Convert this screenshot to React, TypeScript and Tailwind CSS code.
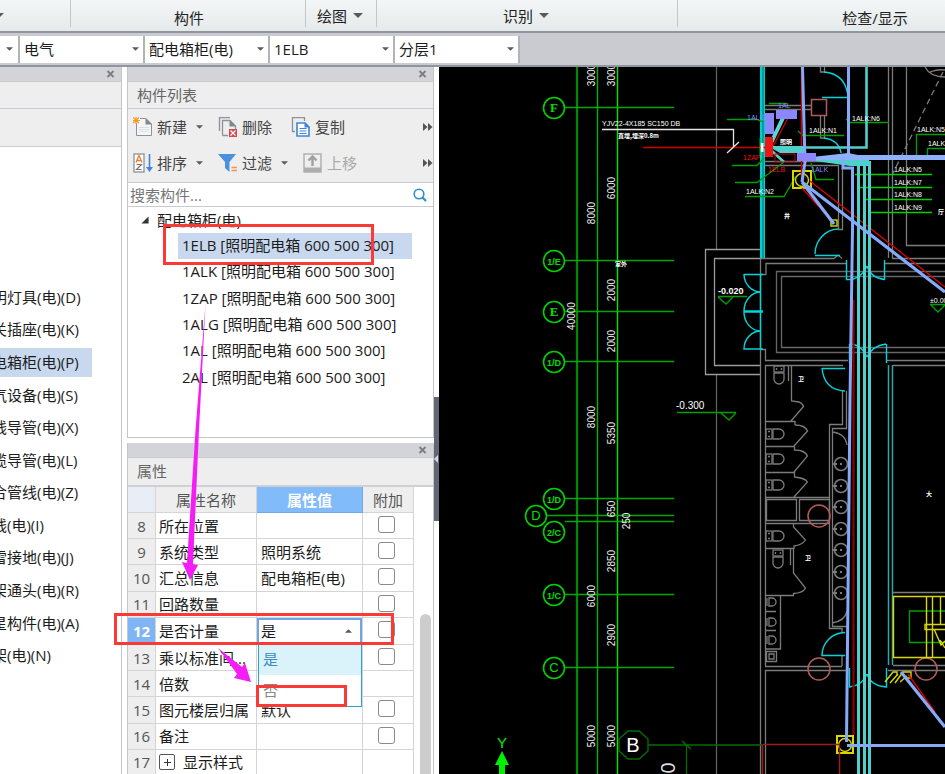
import type { ReactNode } from "react"
import clsx from "clsx"

const modules = [
  "明灯具(电)(D)",
  "关插座(电)(K)",
  "电箱柜(电)(P)",
  "气设备(电)(S)",
  "线导管(电)(X)",
  "缆导管(电)(L)",
  "合管线(电)(Z)",
  "线(电)(I)",
  "雷接地(电)(J)",
  "架通头(电)(R)",
  "星构件(电)(A)",
  "架(电)(N)",
]

const components = ["1ELB", "1ALK", "1ZAP", "1ALG", "1AL", "2AL"]

type Property = { id: number; name: string; value?: string; extra?: boolean; group?: boolean }

const properties: Property[] = [
  { id: 8, name: "所在位置", extra: true },
  { id: 9, name: "系统类型", value: "照明系统", extra: true },
  { id: 10, name: "汇总信息", value: "配电箱柜(电)", extra: true },
  { id: 11, name: "回路数量", extra: true },
  { id: 12, name: "是否计量", value: "是", extra: true },
  { id: 13, name: "乘以标准间...", extra: true },
  { id: 14, name: "倍数" },
  { id: 15, name: "图元楼层归属", value: "默认", extra: true },
  { id: 16, name: "备注", extra: true },
  { id: 17, name: "显示样式", group: true },
]

function Caret({ up, big }: { up?: boolean; big?: boolean }) {
  return (
    <svg
      viewBox="0 0 10 5"
      className={clsx("shrink-0 fill-[#5a5a5a]", big ? "h-[5px] w-[10px]" : "h-1 w-[7px]", up && "rotate-180")}
    >
      <path d="M0 0H10L5 5Z" />
    </svg>
  )
}

function Combo({ label, value }: { label: string; value: string }) {
  return (
    <div className="relative h-[27px] w-[125px] shrink-0 border-r-2 border-[#b0b3b8] bg-white">
      <select aria-label={label} className="h-full w-full appearance-none pl-1 leading-[26px] outline-none">
        <option>{value}</option>
      </select>
      <span className="pointer-events-none absolute top-[11px] right-1">
        <Caret />
      </span>
    </div>
  )
}

function PanelBar() {
  return (
    <div className="flex h-[15px] shrink-0 items-center justify-end border-b border-[#c9cbd0] bg-[#d3d4d9] pr-[6px]">
      <button aria-label="关闭" className="p-0">
        <svg viewBox="0 0 9 8" className="h-2 w-[9px]" stroke="#7d7d7d" strokeWidth="1.8">
          <path d="M1.500 1L7.500 7M7.500 1L1.500 7" />
        </svg>
      </button>
    </div>
  )
}

function ToolButton({ icon, label, menu, disabled }: { icon: ReactNode; label: string; menu?: boolean; disabled?: boolean }) {
  return (
    <button disabled={disabled} className={clsx("flex items-center", disabled ? "text-[#a9a9a9]" : "text-[#444]")}>
      <svg viewBox="0 0 20 20" className="mr-1 size-5" fill="none">
        {icon}
      </svg>
      {label}
      {menu && (
        <span className="ml-[9px] flex">
          <Caret />
        </span>
      )}
    </button>
  )
}

function More() {
  return (
    <button aria-label="更多" className="ml-auto">
      <svg viewBox="0 0 10 8" className="h-2 w-[10px]" fill="#555">
        <path d="M0 0L4.500 4L0 8ZM5 0L9.500 4L5 8Z" />
      </svg>
    </button>
  )
}

const newIcon = (
  <>
    <path d="M3.500 6V18.500H18.500V7L13 1.500H7" fill="#f4f5f6" stroke="#8b9299" />
    <path d="M12.500 1V7.500H19Z" fill="#7f878f" />
    <path d="M6 10.500H16M6 12.500H16M6 14.500H16" stroke="#dcdfe2" />
    <path d="M0 .5L6 6M6 .5L0 6M3 0V7M0 3.500H7" stroke="#f39c1f" strokeWidth="1.200" />
  </>
)

const deleteIcon = (
  <>
    <path d="M1.500 14V.5H12M4.500 18.500V3.500H12L17.500 9V12M4.500 18.500H10" stroke="#8b9299" strokeWidth="1.300" />
    <path d="M11.500 3V9.500H18Z" fill="#7f878f" />
    <rect x="11" y="12" width="8" height="8" fill="#d8484c" />
    <path d="M12.500 13.500L17.500 18.500M17.500 13.500L12.500 18.500" stroke="#fff" strokeWidth="1.200" />
  </>
)

const copyIcon = (
  <>
    <path d="M4 14.500H1.500V.5H13.500V4" stroke="#8b9299" strokeWidth="1.300" />
    <path d="M6 6H14L18 10V19H6Z" fill="#fff" stroke="#3f84d6" strokeWidth="1.600" />
    <path d="M13.500 5V10.500H19Z" fill="#3f84d6" />
    <path d="M8.500 11.500H15.500M8.500 14H15.500M8.500 16.500H15.500" stroke="#3f84d6" />
  </>
)

const sortIcon = (
  <>
    <rect x="1" y="1" width="10" height="18" fill="#fff" stroke="#8b9299" strokeWidth="1.300" />
    <path d="M3 9.500L6 2.500L9 9.500M4 7.500H8" stroke="#ee7d2b" strokeWidth="1.300" />
    <path d="M3.500 11.500H8.500L3.500 16.500H8.500" stroke="#777" strokeWidth="1.200" />
    <path d="M16.500 1V17" stroke="#3f84d6" strokeWidth="1.600" />
    <path d="M13 14L16.500 19L20 14Z" fill="#3f84d6" />
  </>
)

const filterIcon = (
  <>
    <path d="M0 1H18L11.500 9V19L7 15V9Z" fill="#4a90de" />
    <path d="M13.500 14.500H19M13.500 17.500H19" stroke="#ee9455" strokeWidth="1.300" />
  </>
)

const upIcon = (
  <>
    <rect x="1" y="1" width="17" height="18" stroke="#adadad" strokeWidth="1.400" />
    <rect x="1" y="14.500" width="17" height="4.500" fill="#adadad" />
    <path d="M9.500 13V4M5.500 7.500L9.500 3.500L13.500 7.500" stroke="#a0a0a0" strokeWidth="2.400" />
  </>
)

function Ribbon() {
  return (
    <header className="flex h-[33px] shrink-0 overflow-hidden border-b-2 border-[#9096a0] bg-linear-to-b from-[#f4f6f7] to-[#e5eaeb] text-[#222]">
      <div className="flex h-[27px] w-[71px] shrink-0 items-center border-r border-[#c3c7ca] pt-1">
        <span className="-ml-[6px]">
          <Caret big />
        </span>
      </div>
      <div className="h-[27px] w-[235px] shrink-0 border-r border-[#c3c7ca] pt-2 pl-[2px] text-center leading-5">构件</div>
      <button className="flex h-[27px] w-[71px] shrink-0 items-center justify-center gap-1.5 border-r border-[#c3c7ca] pt-1 pr-[2px]">
        绘图
        <Caret big />
      </button>
      <button className="flex h-[27px] w-[301px] shrink-0 items-center justify-center gap-1.5 border-r border-[#c3c7ca] pt-1 pr-[2px]">
        识别
        <Caret big />
      </button>
      <div className="w-[396px] shrink-0 pt-2 pr-[2px] text-center leading-5">检查/显示</div>
    </header>
  )
}

function ModulePanel() {
  return (
    <aside className="flex w-[122px] shrink-0 flex-col overflow-hidden border-r border-[#c3c5c9] bg-white">
      <PanelBar />
      <div className="h-[27px] shrink-0 border-b border-[#c9cbd0] bg-[#eee]" />
      <div className="h-[38px] shrink-0 border-b border-[#c9cbd0] bg-[#eee]" />
      <ul className="mt-[134px] grid h-[391px] shrink-0 auto-rows-fr items-center">
        {modules.map((m) => (
          <li key={m} className={clsx("h-[29px] w-[92px]", m.includes("(P)") && "bg-[#c8d8ee]")}>
            <button className="-ml-2 block leading-7 whitespace-nowrap">{m}</button>
          </li>
        ))}
      </ul>
    </aside>
  )
}

function ComponentPanel() {
  return (
    <section className="flex h-[371px] shrink-0 flex-col border border-t-0 border-[#c3c5c9] bg-white">
      <PanelBar />
      <h2 className="h-[27px] shrink-0 border-b border-[#c9cbd0] bg-[#eee] pl-[9px] leading-[26px] text-[#666]">构件列表</h2>
      <div className="h-[74px] shrink-0 border-b border-[#c9cbd0] bg-[#eee] pl-[5px]">
        <div className="flex h-9 items-center gap-[15px]">
          <ToolButton icon={newIcon} label="新建" menu />
          <ToolButton icon={deleteIcon} label="删除" />
          <span className="ml-1">
            <ToolButton icon={copyIcon} label="复制" />
          </span>
          <More />
        </div>
        <div className="flex h-9 items-center gap-[15px]">
          <ToolButton icon={sortIcon} label="排序" menu />
          <ToolButton icon={filterIcon} label="过滤" menu />
          <ToolButton icon={upIcon} label="上移" disabled />
          <More />
        </div>
      </div>
      <div className="flex h-6 shrink-0 items-center border-b border-[#c9cbd0] pr-1.5">
        <input
          aria-label="搜索构件"
          placeholder="搜索构件..."
          className="min-w-0 flex-1 pl-0.5 leading-5 outline-none placeholder:text-[#777]"
        />
        <svg viewBox="0 0 14 14" className="size-[14px]" fill="none" stroke="#2c8fc9">
          <circle cx="6" cy="6" r="4.800" strokeWidth="1.600" />
          <path d="M9.500 9.500L13 13" strokeWidth="2.200" />
        </svg>
      </div>
      <div className="flex h-[26px] shrink-0 items-center gap-2 pl-[13px]">
        <svg viewBox="0 0 9 9" className="size-2" fill="#333">
          <path d="M8.500 .5V8.500H.5Z" />
        </svg>
        <span>配电箱柜(电)</span>
      </div>
      <ul className="ml-[50px] grid h-[158px] w-[234px] auto-rows-fr">
        {components.map((c, i) => (
          <li key={c} className={clsx("pl-1 whitespace-nowrap", i === 0 && "bg-[#c8d8ee]")}>
            <button className="block leading-[25px]">{c} [照明配电箱 600 500 300]</button>
          </li>
        ))}
      </ul>
    </section>
  )
}

function ValueCell({ row }: { row: Property }) {
  if (row.id !== 12) return <>{row.value}</>
  return (
    <div className="relative -mx-1 h-[26px]">
      <button className="flex h-full w-full items-center justify-between border-2 border-[#6fa5e6] bg-white pr-2 pl-0.5">
        是
        <Caret up />
      </button>
      <ul role="listbox" className="absolute top-[25px] right-0 left-px z-10 border border-[#2ba0d4] bg-white">
        <li role="option" aria-selected="true" className="h-[31px] bg-[#daf2fa] pl-1 leading-[30px] text-[#3f8cc5]">
          是
        </li>
        <li role="option" aria-selected="false" className="h-[31px] pl-1 leading-[30px] text-[#888]">
          否
        </li>
      </ul>
    </div>
  )
}

function PropertyPanel() {
  return (
    <section className="mt-[5px] flex min-h-0 flex-1 flex-col overflow-hidden border-x border-[#c3c5c9] bg-white">
      <PanelBar />
      <h2 className="h-[29px] shrink-0 border-b-2 border-[#cfd0d4] bg-[#eee] pl-[9px] leading-[27px] text-[#666]">属性</h2>
      <div className="flex min-h-0 flex-1">
        <table className="h-[289px] w-[286px] shrink-0 table-fixed border-separate border-spacing-0">
          <colgroup>
            <col className="w-7" />
            <col className="w-[101px]" />
            <col className="w-[106px]" />
            <col className="w-[51px]" />
          </colgroup>
          <thead>
            <tr className="h-[26px] text-[#555]">
              <th className="border-r border-b border-[#d4d4d4] bg-[#e9edf5]" />
              <th className="border-r border-b border-[#d4d4d4] bg-[#eee] p-0 leading-5 font-normal">属性名称</th>
              <th className="border-r border-b border-[#6fa9ef] bg-[#82bbfa] p-0 leading-5 font-bold text-white">属性值</th>
              <th className="border-r border-b border-[#d4d4d4] bg-[#eee] p-0 leading-5 font-normal">附加</th>
            </tr>
          </thead>
          <tbody>
            {properties.map((row) => (
              <tr key={row.id} className="h-[26px]">
                <th
                  scope="row"
                  className={clsx(
                    "border-r border-b border-[#d4d4d4] p-0 leading-5",
                    row.id === 12 ? "bg-[#7fb5f5] font-bold text-white" : "bg-[#eee] font-normal text-[#555]"
                  )}
                >
                  {row.id}
                </th>
                <td className="border-r border-b border-[#d4d4d4] py-0 pr-0 pl-[3px] leading-5 whitespace-nowrap">
                  {row.group ? (
                    <div className="flex items-center gap-2">
                      <button aria-label="展开" className="flex size-4 items-center justify-center rounded-xs border border-[#555]">
                        <svg viewBox="0 0 7 7" className="size-[7px]" stroke="#333">
                          <path d="M0 3.500H7M3.500 0V7" />
                        </svg>
                      </button>
                      {row.name}
                    </div>
                  ) : (
                    row.name
                  )}
                </td>
                <td className="border-r border-b border-[#d4d4d4] px-1 py-0 leading-5 whitespace-nowrap">
                  <ValueCell row={row} />
                </td>
                <td className="border-r border-b border-[#d4d4d4] py-0 pr-1 pl-0">
                  {row.extra && (
                    <input
                      type="checkbox"
                      aria-label={`附加 ${row.name}`}
                      className="mx-auto mb-0.5 block size-[17px] appearance-none rounded-[3px] border border-[#8a8a8a] bg-white"
                    />
                  )}
                </td>
              </tr>
            ))}
          </tbody>
        </table>
        <div className="mt-[127px] ml-[6px] w-[11px] rounded-t-full bg-[#cdcdcd]" />
      </div>
    </section>
  )
}

const axes = [
  { x: 554, y: 108, label: "F" },
  { x: 554, y: 261, label: "1/E" },
  { x: 554, y: 312, label: "E" },
  { x: 554, y: 362, label: "1/D" },
  { x: 554, y: 499, label: "1/D" },
  { x: 536, y: 516, label: "D" },
  { x: 554, y: 532, label: "2/C", lineY: 522 },
  { x: 554, y: 595, label: "1/C" },
  { x: 554, y: 668, label: "C" },
]

const dimensions: [number, number, string][] = [
  [591, 75, "3000"],
  [611, 75, "3000"],
  [611, 188, "6000"],
  [591, 213, "8000"],
  [611, 290, "2000"],
  [571, 316, "40000"],
  [611, 341, "2000"],
  [591, 417, "8000"],
  [611, 433, "5350"],
  [611, 509, "650"],
  [626, 521, "250"],
  [611, 561, "2850"],
  [591, 596, "6000"],
  [611, 635, "2900"],
  [591, 736, "5000"],
  [611, 736, "5000"],
]

const circuits: [number, number, string][] = [
  [809, 133, "1ALK:N1"],
  [852, 121, "1ALK:N6"],
  [917, 132, "1ALK:N5"],
  [928, 146, "1ALK:N3"],
  [746, 194, "1ALK:N2"],
  [894, 172, "1ALK:N5"],
  [894, 185, "1ALK:N7"],
  [894, 197, "1ALK:N8"],
  [894, 210, "1ALK:N9"],
]

function Toilet({ x, y, turned }: { x: number; y: number; turned?: boolean }) {
  return (
    <g transform={`translate(${x} ${y})${turned ? " rotate(90)" : ""}`}>
      <rect x="0" y="-5" width="6" height="10" />
      <path d="M2 -2.500H4M2 2.500H4M7 -5V5M7 -5H13A5 5 0 0 1 13 5H7" />
    </g>
  )
}

function Drawing() {
  return (
    <svg
      viewBox="439 67 506 707"
      preserveAspectRatio="xMinYMin slice"
      className="absolute inset-0 h-full w-full font-['Liberation_Sans',sans-serif]"
      fill="none"
    >
      {/* walls */}
      <g stroke="#7b7b7b" strokeWidth="1.300">
        <path d="M716.500 67V249M716.500 375V774" stroke="#5e5e5e" />
        <path d="M761 249.500H705.500V374.500H760M761 258.500H714.500V365.500H760" stroke="#9a9a9a" />
        <path d="M760.500 258V774M765.500 365V666M765.500 670V774" />
        <path d="M761 274.500H766V263.500H846M761 258.500H834L838 255L842 258.500" />
        <path d="M884 263.500H945M892 258.500H945M760 349.500H765.500V360.500H848M887 360.500H945M765 365.500H843M893 365.500H945" />
        <path d="M945 271.500H776.500V352.500H945M945 276.500H781.500V347.500H945" stroke="#666" />
        <path d="M888.500 67V258M892.500 67V258M906.500 67V245.500H945" />
        <path d="M765 105.500H812M765 109.500H812M820.500 115V138H824.500V115M820.500 67V72H824.500V67" />
        <path d="M765 161.500H842.500V229.500H838.500V165.500H765" />
        <path d="M925 67Q930 77 945 77M930 72Q938 69 945 70" />
        <path d="M943 72L892 175" strokeDasharray="6 4" />
        {/* stalls */}
        <path d="M791.500 366V401L799 402Q803 404 803.500 406.500L791 421M788.500 366V381M766 421.500H795V425" />
        <path d="M795 425Q805 425 807.500 431L794 446M766 446.500H794.500V450Q805 450 807.500 456L794 472M766 472.500H794.500V477Q805 478 807.500 482L794 497M766 497.500H829" />
        <path d="M766.500 499.500H796.500V520.500H766.500ZM799.500 499.500H829.500V520.500H799.500ZM766 523.500H829M793.500 524V527L805.500 540Q802 545 794 546V549M766 548.500H793.500V573L805.500 588Q803 593 793.500 593.500V595.500H766M790.500 549V565" />
        <path d="M842.500 391V424.500H829.500V628.500H842V632M846.500 391V428.500H832.500V626.500H847M842 655V666M765 666.500H842M765 670.500H847M893 592.500H945M893 665.500H945M888 670.500H945" />
        <path d="M832 432Q845 433 847 445M832 623Q845 621 847 611" />
        <path d="M780.500 595V649H766M766 611.500H776M766 630.500H776M766.500 651.500H776.500V661.500H766.500ZM769 654H774V659H769Z" />
        {[602, 622, 640].map((y) => (
          <path key={y} d={`M767 ${y - 4}V${y + 4}M769 ${y - 4}H772A4 4 0 0 1 772 ${y + 4}H769Z`} />
        ))}
        {[434, 459, 485, 536].map((y) => (
          <Toilet key={y} x={766} y={y} />
        ))}
        <Toilet x={779} y={366} turned />
        <Toilet x={778} y={550} turned />
        {[464, 486, 507, 529, 550, 572, 593].map((y) => (
          <g key={y}>
            <circle cx="841" cy={y} r="6.500" strokeWidth="1.600" />
            <path d={`M832 ${y}H837M840 ${y}H842`} strokeWidth="2" />
          </g>
        ))}
      </g>
      <g stroke="#b55a5a" strokeWidth="1.500">
        <rect x="811.500" y="99.500" width="15" height="16" />
        <circle cx="819" cy="516" r="11" />
        <circle cx="819" cy="669" r="11" />
        <circle cx="926" cy="669" r="11" />
      </g>

      {/* doors */}
      <g stroke="#00d5dc" strokeWidth="1.400">
        <path d="M762.500 67V258" strokeWidth="5" stroke="#00cfd2" />
        <path d="M763 67V258" stroke="#088" />
        <path d="M760.500 274V349M744 274.500H763M744 274A17 18 0 0 0 761 292A17 19 0 0 0 744 311A17 19 0 0 0 761 331A17 18 0 0 0 744 349H763" />
        <path d="M744 311.500H763" strokeWidth="2.500" />
        <path d="M822 97.500H848M824 72Q846 74 848 97M824 138Q839 140 841 153" />
        <path d="M838 229A24 25 0 0 0 815 254M815 255.500H840M845 230" />
        <path d="M846.500 260V279.500H852Q863 276 867 266M884.500 260V279.500Q871 278 867 266" />
        <path d="M849.500 344V363M852 344Q862 346 867 357M886.500 344V363M886 344Q872 346 867 357" />
        <path d="M822 368.500H845M822 368Q824 390 845 391" />
        <path d="M845 632.500A23 23 0 0 0 822 655.500H845" />
        <path d="M849.500 668V687Q863 685 867 674M886.500 668V687Q871 686 867 674" />
      </g>
      <path d="M888.500 365V665M892.500 365V665" stroke="#35a5a5" strokeWidth="1.500" />

      {/* axis grid */}
      <path d="M577 67V774" stroke="#008a00" strokeWidth="2.200" />
      <path d="M597.500 67V774" stroke="#00b400" strokeWidth="1.400" />
      <path d="M617.500 67V774" stroke="#00e800" strokeWidth="1.400" />
      {axes.map((a) => (
        <g key={a.y} stroke="#00d000" strokeWidth="1.600">
          <circle cx={a.x} cy={a.y} r="10.500" />
          <path d={`M${a.x + 11} ${(a.lineY ?? a.y) - 0.5}H674`} stroke="#00a800" />
          <text
            x={a.x}
            y={a.y + 4}
            fontSize={a.label.length > 1 ? 9 : 13}
            textAnchor="middle"
            fill="#00e000"
            stroke="none"
            className={clsx(
              a.label.length > 1 && "font-bold",
              (a.label === "E" || a.label === "F") && "font-['Liberation_Serif',serif] font-bold"
            )}
          >
            {a.label}
          </text>
        </g>
      ))}
      {dimensions.map(([x, y, t]) => (
        <text key={`${x}-${y}`} transform={`translate(${x + 4} ${y}) rotate(-90)`} fontSize="10" textAnchor="middle" fill="#f0f0f0">
          {t}
        </text>
      ))}
      <path d="M628 731L639 731L648 739V751L639 759H628L619 751V739Z" stroke="#006e00" strokeWidth="1.400" />
      <path d="M648 745H763M686.500 745V774M682 741L691 749" stroke="#006e00" strokeWidth="1.300" />
      <text x="633" y="752" fontSize="20" textAnchor="middle" fill="#fff">B</text>
      <text transform="translate(675 768) rotate(-90)" fontSize="20" textAnchor="middle" fill="#ddd">0</text>
      <text x="502" y="748" fontSize="15" textAnchor="middle" fill="#00f000">Y</text>
      <path d="M502 751L509 765H505V774H499V765H495Z" fill="#00f000" />

      {/* green leaders and level marks */}
      <g stroke="#00a000" strokeWidth="1.300">
        <path d="M677 412.500H736M721 413L729 420L736 413M718 296.500H747M718 297L726 304L733 297M930 304.500H945M931 305L938 312L945 305" />
        <path d="M727 119.500H757L763 122M732 165.500H757L764 158M735 182.500H757L784 162M745 196.500H784L796 176M769 103.500H787" />
        <path d="M844 135.500H803L798 131M889 122.500H850L846 119M945 134.500H916.500V157M945 148.500H927.500V158M834 179.500H816L811 163" />
        <path d="M855 174.500H932M860 187.500H932M865 199.500H932M870 212.500H932" stroke="#00d000" />
        <path d="M945 611H909.500V642.500H945" />
      </g>

      {/* stairs */}
      <g stroke="#d8d800" strokeWidth="1.400">
        <path d="M945 596.500H893.500V657.500H945M926.500 597V657M932.500 597V657M940.500 597V624" />
        <path d="M945 624.500H925V629.500H945M934 629L941 645L945 641M940 640L945 648" />
        <path d="M885 682L893 672H897V676M890 683L898 674M895 683L903 672H907M900 682L907 676M905 672H911V678H906" />
        <rect x="793" y="171" width="18" height="17" strokeWidth="2" />
        <circle cx="802" cy="180" r="6.500" />
        <rect x="831" y="220" width="6" height="6" />
        <rect x="837" y="736" width="16" height="17" strokeWidth="2" />
        <circle cx="845" cy="745" r="6.500" />
      </g>

      {/* cables */}
      <path d="M643 147.500H765M801.500 67V180" stroke="#d00000" strokeWidth="1.400" />
      <path d="M810 181L945 287M802 188L833 222M908 674L935 712" stroke="#e00000" strokeWidth="1.300" />
      <path d="M853.500 300V735" stroke="#8c0000" strokeWidth="2.200" />
      <path d="M763 744.500H839M762.500 745V774M839.500 745V774" stroke="#9c1c1c" strokeWidth="1.500" />
      <path d="M770 145L783 118" stroke="#5fd6d4" strokeWidth="4" />
      <path d="M772 148L788 118" stroke="#d00000" strokeWidth="1.300" />
      <path d="M866.500 67V147.500H768L784 162" stroke="#4fd0cc" strokeWidth="2.600" />
      <path d="M768 146H803L806 153H780Z" fill="#4fd0cc" />
      <path d="M808 160H869V166H850Z" fill="#4fd0cc" />
      <path d="M858.500 161V774M864.500 161V774M869.500 161V774" stroke="#4fd0cc" strokeWidth="3" />
      <path d="M802.500 67L805 162L802 182M848.500 67V157" stroke="#86a9f8" strokeWidth="3" />
      <path d="M803 158L848 153L858 155H945V160H806Z" fill="#8fb0fa" />
      <path d="M843 158V168H852.500V230L850 400L846.500 742" stroke="#86a9f8" strokeWidth="3" />
      <path d="M802 182L945 292M802 182L834 224M901 672L945 727M847 745.500H945" stroke="#86a9f8" strokeWidth="3.200" />

      {/* distribution boxes */}
      <g fill="#8c86ff">
        <rect x="765" y="113" width="9" height="21" />
        <rect x="776" y="110" width="21" height="9" />
        <rect x="797" y="153" width="19" height="8" />
      </g>
      <rect x="765" y="137" width="8" height="20" fill="#f01414" />
      <rect x="775" y="154" width="20" height="8" stroke="#c00000" />
      <path d="M762 143V152" stroke="#fff" strokeWidth="3" />
      <path d="M760 138V156" stroke="#00c000" />

      {/* labels */}
      <g fontSize="7">
        <text x="747" y="120" fill="#8c86ff">1ALG</text>
        <text x="778" y="108" fill="#8c86ff">1AL</text>
        <text x="811" y="172" fill="#8c86ff">1ALK</text>
        <text x="743" y="160" fill="#f01414">1ZAP</text>
        <text x="768" y="172" fill="#f01414">1ELB</text>
      </g>
      <g fontSize="7" fill="#fff">
        {circuits.map(([x, y, t]) => (
          <text key={`${x}-${y}`} x={x} y={y}>
            {t}
          </text>
        ))}
      </g>
      <path d="M602 129.500H733.500V147M727 153L739 142" stroke="#e6e6e6" strokeWidth="1.300" />
      <g fill="#fff">
        <text x="602" y="126" fontSize="7">YJV22-4X185 SC150 DB</text>
        <text x="676" y="409" fontSize="10">-0.300</text>
        <text x="718" y="294" fontSize="9" className="font-bold">-0.020</text>
        <text x="930" y="303" fontSize="7">±0.00</text>
      </g>
      <g fill="#fff" fontSize="6" className="font-['Noto_Sans_CJK_SC',sans-serif] font-bold">
        <text x="618" y="138">直埋,埋深0.8m</text>
        <text x="615" y="266">室外</text>
        <text x="780" y="144">照明</text>
        <text x="784" y="218">井</text>
        <text x="798" y="381">卫</text>
        <text x="805" y="560">卫</text>
        <text x="926" y="496">大</text>
        <text x="938" y="214">厅</text>
      </g>
    </svg>
  )
}

/* marks drawn on top of the window */
function Marks() {
  return (
    <div className="pointer-events-none absolute inset-0 z-20 overflow-hidden">
      <div className="absolute top-[224px] left-[163px] h-[41px] w-[211px] border-3 border-[#fb3a36]" />
      <div className="absolute top-[613px] left-[114px] h-8 w-[280px] border-3 border-[#fb3a36]" />
      <div className="absolute top-[685px] left-[256px] h-[22px] w-[91px] border-3 border-[#fb3a36]" />
      <svg viewBox="0 0 260 700" className="absolute top-0 left-0 h-[700px] w-[260px]" fill="#f51df5">
        <path d="M205.500 304L199 430L193 564L198 565L190 580L182 562L187 563L195.500 430Z" />
        <path d="M218 648L242 667L245 663L251 682L234 678L237 674Z" />
      </svg>
    </div>
  )
}

export default function App() {
  return (
    <div className="relative flex h-screen flex-col overflow-hidden bg-white font-['Open_Sans','Noto_Sans_CJK_SC',sans-serif] text-[15px] leading-5 text-[#1c1c1c]">
      <Ribbon />
      <div className="flex h-[34px] shrink-0 items-center overflow-hidden border-b-2 border-[#8f969f] bg-[#c9cbd0]">
        <div className="flex h-[27px] w-5 shrink-0 items-center border-r-2 border-[#b0b3b8] bg-white pl-[6px]">
          <Caret />
        </div>
        <Combo label="专业" value="电气" />
        <Combo label="构件类型" value="配电箱柜(电)" />
        <Combo label="构件" value="1ELB" />
        <Combo label="分层" value="分层1" />
      </div>
      <main className="flex min-h-0 flex-1">
        <ModulePanel />
        <div className="ml-[5px] flex w-[307px] shrink-0 flex-col">
          <ComponentPanel />
          <PropertyPanel />
        </div>
        <div className="w-[5px] shrink-0 pt-[330px]">
          <div className="flex h-[124px] items-center bg-[#5f6973]">
            <svg viewBox="0 0 4 8" className="h-2 w-1" fill="#d5d8db">
              <path d="M4 0V8L0 4Z" />
            </svg>
          </div>
        </div>
        <div className="relative min-w-0 flex-1 overflow-hidden bg-black">
          <Drawing />
        </div>
      </main>
      <Marks />
    </div>
  )
}
